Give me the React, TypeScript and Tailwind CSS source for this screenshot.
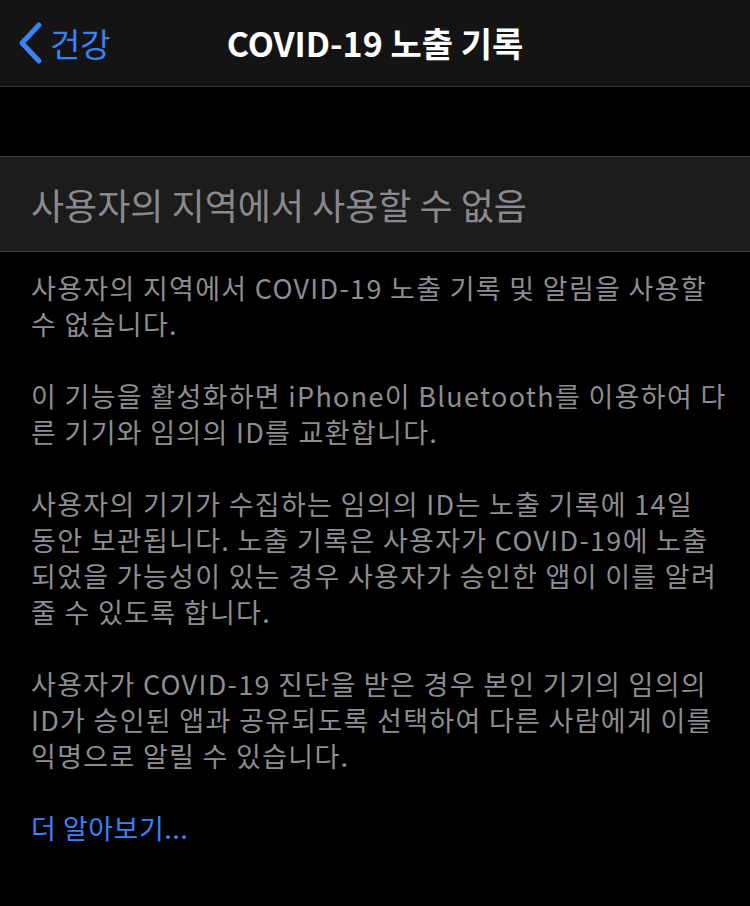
const FONT = { fontFamily: '"Noto Sans CJK KR", "Noto Sans", sans-serif' };

const PARAGRAPHS: string[][] = [
  ["사용자의 지역에서 COVID-19 노출 기록 및 알림을 사용할", "수 없습니다."],
  ["이 기능을 활성화하면 iPhone이 Bluetooth를 이용하여 다", "른 기기와 임의의 ID를 교환합니다."],
  [
    "사용자의 기기가 수집하는 임의의 ID는 노출 기록에 14일",
    "동안 보관됩니다. 노출 기록은 사용자가 COVID-19에 노출",
    "되었을 가능성이 있는 경우 사용자가 승인한 앱이 이를 알려",
    "줄 수 있도록 합니다.",
  ],
  [
    "사용자가 COVID-19 진단을 받은 경우 본인 기기의 임의의",
    "ID가 승인된 앱과 공유되도록 선택하여 다른 사람에게 이를",
    "익명으로 알릴 수 있습니다.",
  ],
];

export default function App() {
  return (
    <div className="min-h-[906px] w-[750px] bg-black" style={FONT}>
      {/* nav bar */}
      <div className="relative flex h-[87px] items-center border-b border-[#3a3a3a] bg-[#141414]">
        <div className="flex items-center pl-[16px] text-[#3a82f6]">
          <svg width="30" height="44" viewBox="0 0 30 44" fill="none">
            <path d="M23 4 L6 22 L23 40" stroke="currentColor" strokeWidth="5" strokeLinecap="round" strokeLinejoin="round" />
          </svg>
          <span className="ml-[4px] text-[33px] leading-none">건강</span>
        </div>
        <div className="absolute inset-x-0 top-0 flex h-[86px] items-center justify-center">
          <span className="text-[34px] font-semibold leading-none text-white">COVID-19 노출 기록</span>
        </div>
      </div>

      <div className="h-[69px]" />

      {/* section cell */}
      <div className="flex h-[96px] items-center border-y border-[#3c3c3c] bg-[#1c1c1c] pl-[31px]">
        <span className="text-[36px] leading-none text-[#8a8a8e]">사용자의 지역에서 사용할 수 없음</span>
      </div>

      {/* footer text */}
      <div className="flex flex-col gap-[36px] px-[31px] pt-[18px] text-[27px] leading-[36px] tracking-[1.3px] text-[#8d8d92]">
        {PARAGRAPHS.map((lines, i) => (
          <p key={i}>
            {lines.map((l, j) => (
              <span key={j} className="block whitespace-nowrap">
                {l}
              </span>
            ))}
          </p>
        ))}
        <p className="tracking-[0.5px] text-[#3a82f6]">더 알아보기...</p>
      </div>
    </div>
  );
}
